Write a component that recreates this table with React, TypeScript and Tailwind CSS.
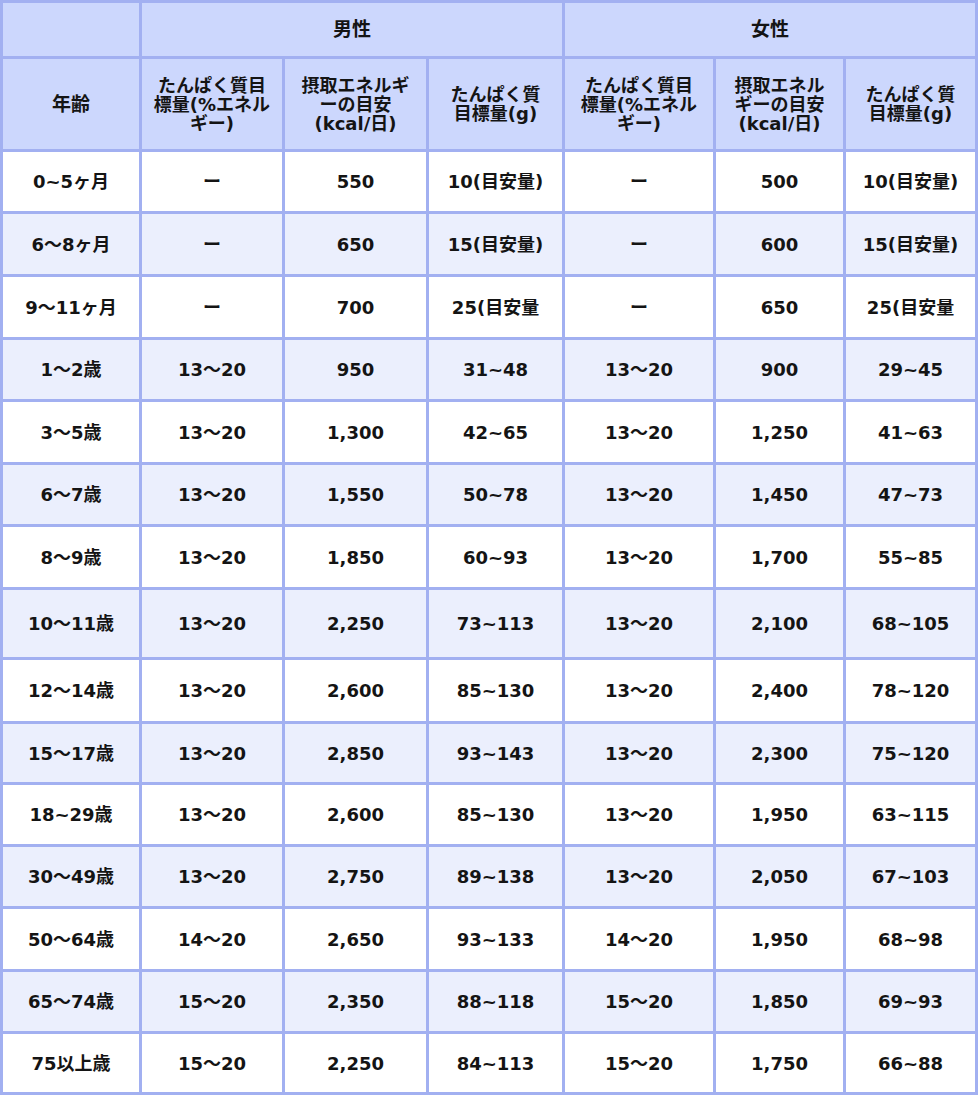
import React from "react";

type Row = {
  age: string;
  h: string;
  stripe: boolean;
  m: [string, string, string];
  f: [string, string, string];
};

const rows: Row[] = [
  { age: "0~5ヶ月", h: "h-[62px]", stripe: false, m: ["ー", "550", "10(目安量)"], f: ["ー", "500", "10(目安量)"] },
  { age: "6〜8ヶ月", h: "h-[63px]", stripe: true, m: ["ー", "650", "15(目安量)"], f: ["ー", "600", "15(目安量)"] },
  { age: "9〜11ヶ月", h: "h-[63px]", stripe: false, m: ["ー", "700", "25(目安量"], f: ["ー", "650", "25(目安量"] },
  { age: "1〜2歳", h: "h-[62px]", stripe: true, m: ["13〜20", "950", "31~48"], f: ["13〜20", "900", "29~45"] },
  { age: "3〜5歳", h: "h-[63px]", stripe: false, m: ["13〜20", "1,300", "42~65"], f: ["13〜20", "1,250", "41~63"] },
  { age: "6〜7歳", h: "h-[62px]", stripe: true, m: ["13〜20", "1,550", "50~78"], f: ["13〜20", "1,450", "47~73"] },
  { age: "8〜9歳", h: "h-[63px]", stripe: false, m: ["13〜20", "1,850", "60~93"], f: ["13〜20", "1,700", "55~85"] },
  { age: "10〜11歳", h: "h-[70px]", stripe: true, m: ["13〜20", "2,250", "73~113"], f: ["13〜20", "2,100", "68~105"] },
  { age: "12〜14歳", h: "h-[64px]", stripe: false, m: ["13〜20", "2,600", "85~130"], f: ["13〜20", "2,400", "78~120"] },
  { age: "15〜17歳", h: "h-[61px]", stripe: true, m: ["13〜20", "2,850", "93~143"], f: ["13〜20", "2,300", "75~120"] },
  { age: "18~29歳", h: "h-[62px]", stripe: false, m: ["13〜20", "2,600", "85~130"], f: ["13〜20", "1,950", "63~115"] },
  { age: "30〜49歳", h: "h-[62px]", stripe: true, m: ["13〜20", "2,750", "89~138"], f: ["13〜20", "2,050", "67~103"] },
  { age: "50〜64歳", h: "h-[63px]", stripe: false, m: ["14〜20", "2,650", "93~133"], f: ["14〜20", "1,950", "68~98"] },
  { age: "65〜74歳", h: "h-[62px]", stripe: true, m: ["15〜20", "2,350", "88~118"], f: ["15〜20", "1,850", "69~93"] },
  { age: "75以上歳", h: "h-[61px]", stripe: false, m: ["15〜20", "2,250", "84~113"], f: ["15〜20", "1,750", "66~88"] },
];

// each cell draws its right and bottom line; the table draws the top and left ones
const cell = "border-r-[3px] border-b-[3px] border-[#a2b0f1] p-0 text-center align-middle";
const head = `${cell} bg-[#ccd7fd]`;

const Sub = ({ lines }: { lines: string[] }) => (
  <th className={`${head} text-[18px] leading-[19px] font-bold`}>
    {lines.map((l, i) => (
      <div key={i} className="whitespace-nowrap">
        {l}
      </div>
    ))}
  </th>
);

export default function App() {
  return (
    <div
      className="w-[978px] bg-white text-[#141414]"
      style={{ fontFamily: '"DejaVu Sans", "Noto Sans CJK JP", sans-serif' }}
    >
      <table className="w-[978px] table-fixed border-separate border-spacing-0 border-l-[3px] border-t-[3px] border-[#a2b0f1]">
        <colgroup>
          <col className="w-[139px]" />
          <col className="w-[143px]" />
          <col className="w-[144px]" />
          <col className="w-[136px]" />
          <col className="w-[151px]" />
          <col className="w-[130px]" />
          <col className="w-[132px]" />
        </colgroup>
        <thead>
          <tr className="h-[56px]">
            <th className={head}></th>
            <th colSpan={3} className={`${head} text-[19px] font-bold`}>
              男性
            </th>
            <th colSpan={3} className={`${head} text-[19px] font-bold`}>
              女性
            </th>
          </tr>
          <tr className="h-[93px]">
            <th className={`${head} text-[19px] font-bold`}>年齢</th>
            <Sub lines={["たんぱく質目", "標量(%エネル", "ギー)"]} />
            <Sub lines={["摂取エネルギ", "ーの目安", "(kcal/日)"]} />
            <Sub lines={["たんぱく質", "目標量(g)"]} />
            <Sub lines={["たんぱく質目", "標量(%エネル", "ギー)"]} />
            <Sub lines={["摂取エネル", "ギーの目安", "(kcal/日)"]} />
            <Sub lines={["たんぱく質", "目標量(g)"]} />
          </tr>
        </thead>
        <tbody>
          {rows.map((r) => (
            <tr key={r.age} className={`${r.h} ${r.stripe ? "bg-[#ebeffd]" : "bg-white"}`}>
              <td className={`${cell} text-[18px] font-bold whitespace-nowrap`}>{r.age}</td>
              {[...r.m, ...r.f].map((v, i) => (
                <td key={i} className={`${cell} text-[18px] font-bold whitespace-nowrap`}>
                  {v}
                </td>
              ))}
            </tr>
          ))}
        </tbody>
      </table>
    </div>
  );
}
